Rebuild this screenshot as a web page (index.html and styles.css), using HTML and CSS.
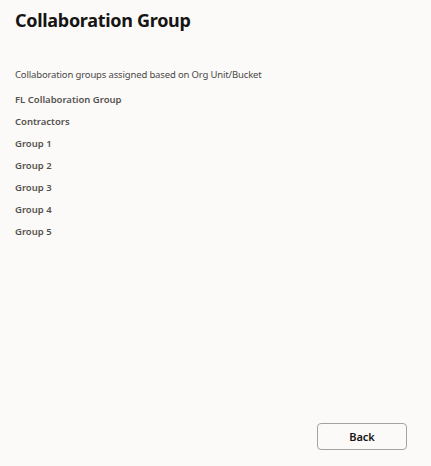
FILE: index.html
```html
<!DOCTYPE html>
<html>
<head>
    <title>Collaboration Group</title>
    <link rel="stylesheet" href="styles.css">
</head>
<body>
    <div class="page">
        <h1>Collaboration Group</h1>
        <p class="hint">Collaboration groups assigned based on Org Unit/Bucket</p>
        <ul class="groups">
            <li>FL Collaboration Group</li>
            <li>Contractors</li>
            <li>Group 1</li>
            <li>Group 2</li>
            <li>Group 3</li>
            <li>Group 4</li>
            <li>Group 5</li>
        </ul>
        <div class="footer">
            <button class="button">Back</button>
        </div>
    </div>
</body>
</html>
```

FILE: styles.css
```css
html, body {
    margin: 0;
    height: 100%;
}
body {
    font-family: "Noto Sans", Arial, sans-serif;
    background: #fbfaf9;
    color: #161513;
}
.page {
    height: 100%;
    box-sizing: border-box;
    padding: 8px 24px 16px 15px;
    display: flex;
    flex-direction: column;
}
h1 {
    font-size: 18px;
    font-weight: 700;
    letter-spacing: -0.3px;
    margin: 0;
    line-height: 24px;
}
.hint {
    font-size: 9.5px;
    letter-spacing: -0.15px;
    color: #4a4845;
    margin: 36px 0 0;
    line-height: 14px;
}
.groups {
    list-style: none;
    margin: 7px 0 0;
    padding: 0;
}
.groups li {
    font-size: 9.5px;
    font-weight: 600;
    color: #55524e;
    line-height: 22px;
}
.footer {
    margin-top: auto;
    display: flex;
    justify-content: flex-end;
}
.button {
    font-family: inherit;
    width: 90px;
    height: 27px;
    background: #fbfaf9;
    border: 1px solid #a6a39e;
    border-radius: 4px;
    font-size: 11px;
    font-weight: 600;
    color: #161513;
}
```
